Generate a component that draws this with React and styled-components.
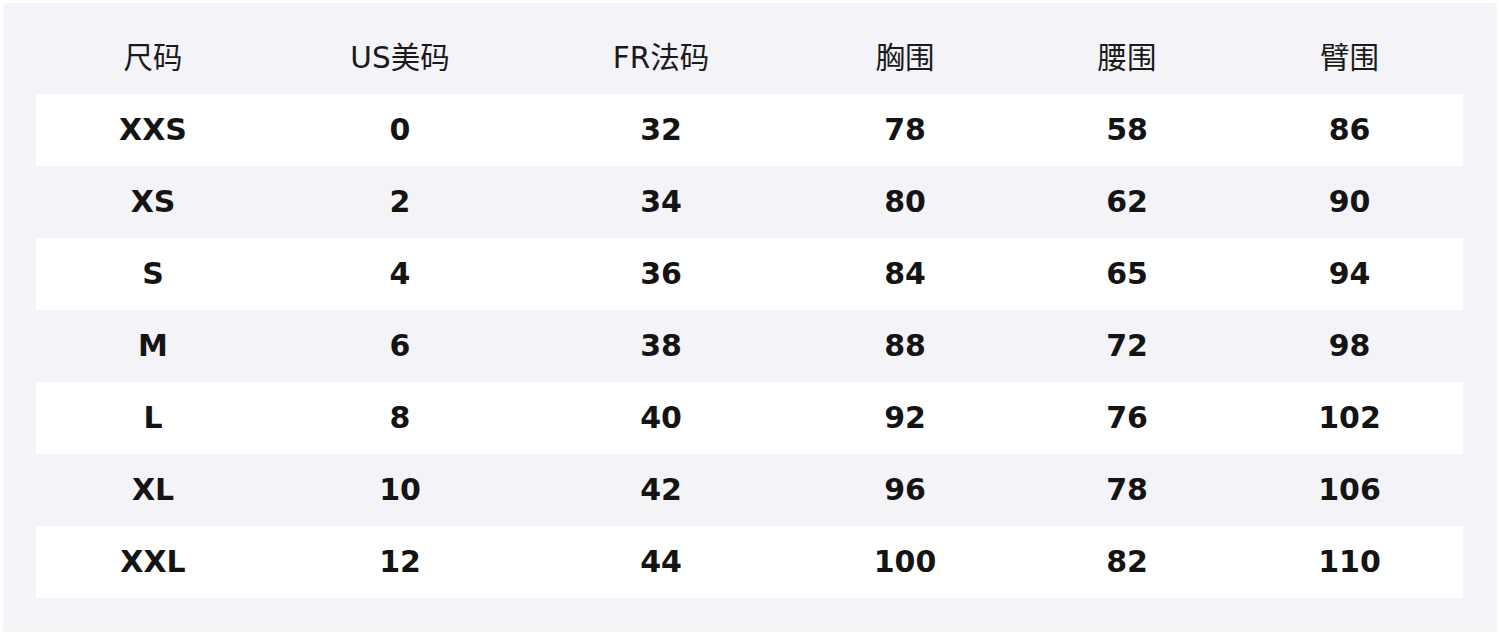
import React from 'react';
import styled, { createGlobalStyle } from 'styled-components';

const GlobalStyle = createGlobalStyle`
  html, body {
    margin: 0;
    padding: 0;
    background: #ffffff;
  }
  body {
    font-family: "DejaVu Sans", "Noto Sans CJK SC", sans-serif;
  }
`;

const Panel = styled.div`
  margin: 3px;
  width: 1494px;
  height: 629px;
  box-sizing: border-box;
  background: #f3f3f8;
  border-radius: 4px;
  padding: 19px 33px 0 33px;
`;

const Table = styled.div`
  display: grid;
  grid-template-columns: 234px 260px 262px 226px 218px 227px;
  width: 1427px;
`;

const Row = styled.div`
  display: contents;

  & > div {
    background: ${(p) => (p.$striped ? '#ffffff' : 'transparent')};
  }
`;

const HeadCell = styled.div`
  height: 72px;
  box-sizing: border-box;
  padding-bottom: 7px;
  display: flex;
  align-items: center;
  justify-content: center;
  font-family: "DejaVu Sans", "Noto Sans CJK SC", sans-serif;
  font-size: 29.5px;
  font-weight: 400;
  color: #1a1a1a;
`;

const Cell = styled.div`
  height: 72px;
  box-sizing: border-box;
  padding-bottom: 2px;
  display: flex;
  align-items: center;
  justify-content: center;
  font-family: "DejaVu Sans", sans-serif;
  font-size: 30px;
  font-weight: 700;
  color: #141414;
`;

const headers = ['尺码', 'US美码', 'FR法码', '胸围', '腰围', '臂围'];

const rows = [
  ['XXS', '0', '32', '78', '58', '86'],
  ['XS', '2', '34', '80', '62', '90'],
  ['S', '4', '36', '84', '65', '94'],
  ['M', '6', '38', '88', '72', '98'],
  ['L', '8', '40', '92', '76', '102'],
  ['XL', '10', '42', '96', '78', '106'],
  ['XXL', '12', '44', '100', '82', '110'],
];

const App = () => (
  <>
    <GlobalStyle />
    <Panel>
      <Table>
        <Row>
          {headers.map((h) => (
            <HeadCell key={h}>{h}</HeadCell>
          ))}
        </Row>
        {rows.map((r, i) => (
          <Row key={r[0]} $striped={i % 2 === 0}>
            {r.map((v, j) => (
              <Cell key={j}>{v}</Cell>
            ))}
          </Row>
        ))}
      </Table>
    </Panel>
  </>
);

export default App;
